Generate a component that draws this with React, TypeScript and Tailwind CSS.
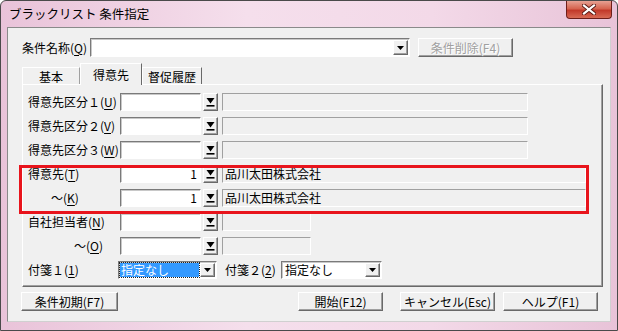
import React from 'react';

const FONT = { fontFamily: '"Noto Sans CJK JP", "Noto Sans", sans-serif' };

const sunken =
  'border border-t-[#7a7a7a] border-l-[#7a7a7a] border-b-white border-r-white shadow-[inset_1px_1px_0_#c8c8c8]';
const raised =
  'border border-t-white border-l-white border-b-[#696969] border-r-[#696969] shadow-[inset_-1px_-1px_0_#a0a0a0] bg-[#f0f0f0]';

const U: React.FC<{ c: string }> = ({ c }) => <span className="underline underline-offset-2">{c}</span>;

const Label: React.FC<{ text: string; k: string; w?: string; indent?: string }> = ({ text, k, w = 'w-[92px]', indent = '' }) => (
  <div className={`${w} ${indent} shrink-0 whitespace-nowrap`}>
    {text}(<U c={k} />)
  </div>
);

const SearchBtn: React.FC = () => (
  <div className={`ml-[2px] w-[15px] h-[18px] flex items-center justify-center ${raised}`}>
    <svg width="9" height="10" viewBox="0 0 9 10">
      <path d="M0.5 1 H8.5 L4.5 6.5 Z" fill="#000" />
      <rect x="0.5" y="8" width="8" height="1.6" fill="#000" />
    </svg>
  </div>
);

const Arrow: React.FC = () => (
  <svg width="7" height="4" viewBox="0 0 7 4">
    <path d="M0 0 H7 L3.5 4 Z" fill="#000" />
  </svg>
);

const LookupRow: React.FC<{
  label: React.ReactNode;
  value?: string;
  name?: string;
  fieldW: string;
}> = ({ label, value = '', name = '', fieldW }) => (
  <div className="flex items-center h-[18px]">
    {label}
    <div className={`w-[81px] h-[18px] bg-white text-right pr-[3px] leading-[16px] ${sunken}`}>{value}</div>
    <SearchBtn />
    <div className={`ml-[4px] ${fieldW} h-[18px] pl-[2px] leading-[16px] border border-t-[#a0a0a0] border-l-[#a0a0a0] border-b-white border-r-white`}>
      {name}
    </div>
  </div>
);

const Combo: React.FC<{ w: string; selected?: boolean }> = ({ w, selected }) => (
  <div className={`${w} h-[18px] bg-white flex items-center ${sunken}`}>
    <div className="flex-1 h-full p-[1px]">
      <div
        className={
          selected
            ? 'h-full bg-[#3399ff] text-white leading-[14px] pl-[1px] outline-1 outline-dotted outline-[#222]'
            : 'h-full leading-[14px] pl-[2px]'
        }
      >
        指定なし
      </div>
    </div>
    <div className={`w-[15px] h-[14px] mr-[1px] flex items-center justify-center ${raised}`}>
      <Arrow />
    </div>
  </div>
);

const Btn: React.FC<{ w: string; children: React.ReactNode; disabled?: boolean; cls?: string }> = ({ w, children, disabled, cls = '' }) => (
  <div
    className={`${w} h-[19px] flex items-center justify-center whitespace-nowrap ${raised} ${cls} ${
      disabled ? 'text-[#a0a0a0] [text-shadow:1px_1px_0_#fff]' : 'text-black'
    }`}
  >
    {children}
  </div>
);

export default function App() {
  return (
    <div
      className="relative w-[618px] h-[331px] flex flex-col text-[12px] text-black bg-[linear-gradient(90deg,#e9c3d9,#f5dfec_40%,#f3d9e8_70%,#e8c3d8)] border border-[#4a4a4a] rounded-t-[6px] overflow-hidden"
      style={FONT}
    >
      {/* title bar */}
      <div className="h-[26px] flex items-start justify-between shrink-0">
        <div className="pl-[8px] pt-[5px] text-[12.5px] leading-[16px] text-black">ブラックリスト 条件指定</div>
        <div className="mr-[5px] w-[46px] h-[18px] rounded-b-[4px] border border-t-0 border-[#6e1e1a] bg-[linear-gradient(180deg,#e7a193,#d5644f_45%,#c2392a_55%,#d86a55)] flex items-center justify-center">
          <svg width="14" height="11" viewBox="0 0 14 11">
            <path d="M2 1.5 L12 9.5 M12 1.5 L2 9.5" stroke="#5a1a14" strokeWidth="4" strokeLinecap="square" />
            <path d="M2 1.5 L12 9.5 M12 1.5 L2 9.5" stroke="#fff" strokeWidth="2.2" strokeLinecap="square" />
          </svg>
        </div>
      </div>

      {/* client area */}
      <div className="mx-[6px] mb-[8px] flex-1 flex flex-col bg-[#f0f0f0] border border-[#8a8a8a] border-b-[#d0d0d0] border-r-[#d0d0d0]">
        {/* condition name */}
        <div className="mt-[10px] ml-[14px] flex items-center h-[19px]">
          <div className="w-[68px] shrink-0 whitespace-nowrap">
            条件名称(<U c="Q" />)
          </div>
          <div className={`w-[320px] h-[19px] bg-white flex items-center justify-end ${sunken}`}>
            <div className={`w-[15px] h-[15px] mr-[1px] flex items-center justify-center ${raised}`}>
              <Arrow />
            </div>
          </div>
          <Btn w="w-[95px]" disabled cls="ml-[8px]">
            条件削除(F4)
          </Btn>
        </div>

        {/* tabs */}
        <div className="mt-[5px] ml-[14px] h-[22px] flex items-end">
          <div className="w-[58px] h-[18px] mb-[-1px] flex items-center justify-center border border-b-0 border-t-white border-l-white border-r-[#a0a0a0] bg-[#f0f0f0]">
            基本
          </div>
          <div className="relative z-10 w-[62px] h-[22px] mb-[-1px] flex items-start pt-[2px] justify-center border border-b-0 border-t-white border-l-white border-r-[#696969] bg-[#f0f0f0]">
            得意先
          </div>
          <div className="w-[60px] h-[18px] mb-[-1px] flex items-center justify-center border border-b-0 border-t-white border-l-white border-r-[#696969] bg-[#f0f0f0]">
            督促履歴
          </div>
        </div>

        {/* tab panel */}
        <div className="ml-[14px] w-[581px] h-[203px] flex flex-col gap-[6px] pt-[8px] pl-[5px] border border-t-white border-l-white border-b-[#696969] border-r-[#696969] shadow-[inset_-1px_-1px_0_#a0a0a0]">
          <LookupRow label={<Label text="得意先区分１" k="U" />} fieldW="w-[306px]" />
          <LookupRow label={<Label text="得意先区分２" k="V" />} fieldW="w-[306px]" />
          <LookupRow label={<Label text="得意先区分３" k="W" />} fieldW="w-[306px]" />
          <LookupRow label={<Label text="得意先" k="T" />} value="1" name="品川太田株式会社" fieldW="w-[364px]" />
          <LookupRow
            label={<Label text="～" k="K" w="w-[69px]" indent="ml-[23px]" />}
            value="1"
            name="品川太田株式会社"
            fieldW="w-[364px]"
          />
          <LookupRow label={<Label text="自社担当者" k="N" />} fieldW="w-[89px]" />
          <LookupRow label={<Label text="～" k="O" w="w-[46px]" indent="ml-[46px]" />} fieldW="w-[89px]" />
          <div className="flex items-center h-[18px]">
            <Label text="付箋１" k="1" w="w-[90px]" />
            <Combo w="w-[99px]" selected />
            <div className="ml-[8px] w-[56px] whitespace-nowrap">
              付箋２(<U c="2" />)
            </div>
            <Combo w="w-[101px]" />
          </div>
        </div>

        {/* bottom buttons */}
        <div className="mt-[5px] ml-[13px] mr-[12px] flex items-center">
          <Btn w="w-[97px]">条件初期(F7)</Btn>
          <div className="flex-1" />
          <Btn w="w-[85px]">開始(F12)</Btn>
          <Btn w="w-[95px]" cls="ml-[17px]">
            キャンセル(Esc)
          </Btn>
          <Btn w="w-[95px]" cls="ml-[8px]">
            ヘルプ(F1)
          </Btn>
        </div>
      </div>

      {/* highlight annotation */}
      <div className="absolute left-[18px] top-[164px] w-[570px] h-[49px] border-[3px] border-[#e8141c] pointer-events-none" />
    </div>
  );
}
